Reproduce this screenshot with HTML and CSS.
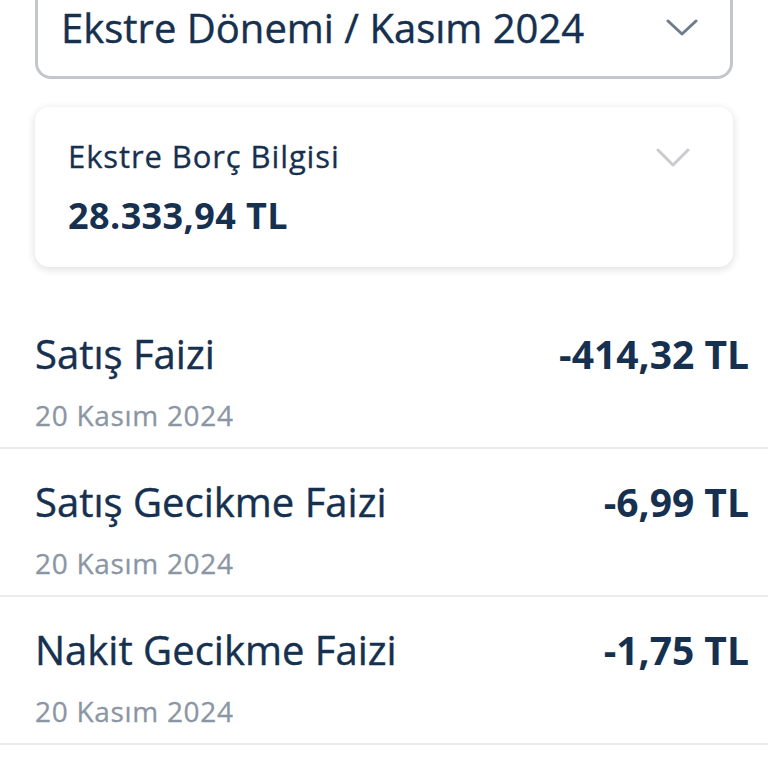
FILE: index.html
```html
<!DOCTYPE html>
<html>
<head>
  <meta charset="utf-8">
  <link rel="stylesheet" href="styles.css">
</head>
<body>
  <div class="statement">
    <div class="period-select">
      <span class="period-text">Ekstre Dönemi / Kasım 2024</span>
      <svg class="chevron chevron-dark" viewBox="0 0 32 18" width="32" height="18">
        <path d="M2 2 L16 15 L30 2" fill="none" stroke="currentColor" stroke-width="3" stroke-linecap="round" stroke-linejoin="round"/>
      </svg>
    </div>

    <div class="debt-card">
      <div class="debt-info">
        <div class="debt-label">Ekstre Borç Bilgisi</div>
        <div class="debt-amount">28.333,94 TL</div>
      </div>
      <svg class="chevron chevron-light" viewBox="0 0 34 20" width="34" height="20">
        <path d="M2 2 L17 17 L32 2" fill="none" stroke="currentColor" stroke-width="3" stroke-linecap="round" stroke-linejoin="round"/>
      </svg>
    </div>

    <ul class="tx-list">
      <li class="tx-row">
        <div class="tx-main">
          <div class="tx-title">Satış Faizi</div>
          <div class="tx-date">20 Kasım 2024</div>
        </div>
        <div class="tx-amount">-414,32 TL</div>
      </li>
      <li class="tx-row">
        <div class="tx-main">
          <div class="tx-title">Satış Gecikme Faizi</div>
          <div class="tx-date">20 Kasım 2024</div>
        </div>
        <div class="tx-amount">-6,99 TL</div>
      </li>
      <li class="tx-row">
        <div class="tx-main">
          <div class="tx-title">Nakit Gecikme Faizi</div>
          <div class="tx-date">20 Kasım 2024</div>
        </div>
        <div class="tx-amount">-1,75 TL</div>
      </li>
    </ul>
  </div>
</body>
</html>
```

FILE: styles.css
```css
/* Ekstre ekranı */
body {
  margin: 0;
  background-color: #fff;
  font-family: "Open Sans", "Noto Sans", sans-serif;
  color: #16304f;
}

.statement {
  display: flex;
  flex-direction: column;
}

/* Dönem seçimi */
.period-select {
  display: flex;
  justify-content: space-between;
  align-items: center;
  margin: -40px 35px 0;
  padding: 38px 32px 21px 23px;
  border: 3px solid #c3c7cc;
  border-radius: 16px;
}

.period-text {
  font-size: 40px;
  line-height: 54px;
  -webkit-text-stroke: 0.4px currentColor;
}

.chevron-dark {
  color: #6f7c8c;
}

.chevron-light {
  color: #c9cbce;
}

/* Borç kartı */
.debt-card {
  display: flex;
  justify-content: space-between;
  align-items: flex-start;
  margin: 28px 35px 0;
  padding: 28px 43px 27px 33px;
  background-color: #fff;
  border-radius: 14px;
  box-shadow: 0 2px 8px rgba(0, 0, 0, 0.14);
}

.debt-label {
  font-size: 31px;
  line-height: 42px;
  letter-spacing: 0.9px;
  -webkit-text-stroke: 0.3px currentColor;
}

.debt-amount {
  margin-top: 15px;
  font-size: 36px;
  line-height: 48px;
  font-weight: 700;
  letter-spacing: 0.4px;
}

.debt-card .chevron {
  margin-top: 13px;
}

/* Hareket listesi */
.tx-list {
  margin: 34px 0 0;
  padding: 0;
  list-style: none;
}

.tx-row {
  display: flex;
  justify-content: space-between;
  align-items: flex-start;
  padding: 27px 19px 12px 35px;
  border-bottom: 2px solid #ebebeb;
}

.tx-title {
  font-size: 40px;
  line-height: 52px;
  -webkit-text-stroke: 0.4px currentColor;
}

.tx-date {
  margin-top: 15px;
  font-size: 28px;
  line-height: 40px;
  letter-spacing: 0.7px;
  color: #8b96a4;
  -webkit-text-stroke: 0.3px currentColor;
}

.tx-amount {
  font-size: 39px;
  line-height: 52px;
  font-weight: 700;
}
```
